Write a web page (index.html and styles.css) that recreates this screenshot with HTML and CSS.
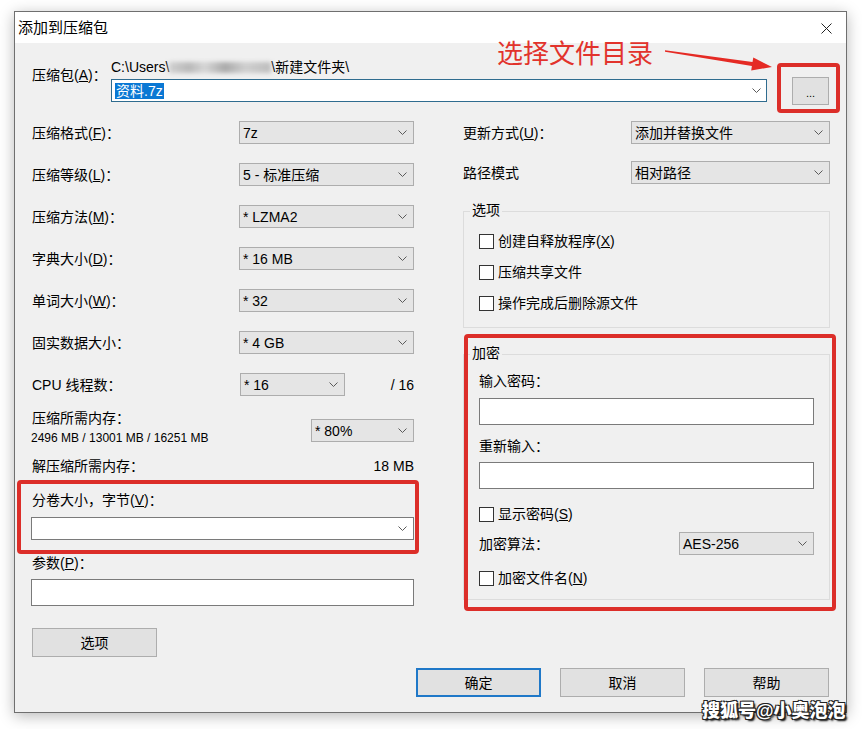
FILE: index.html
```html
<!DOCTYPE html>
<html>
<head>
  <meta charset="utf-8">
  <title>添加到压缩包</title>
  <link rel="stylesheet" href="styles.css">
</head>
<body>
  <div class="page">
    <div class="window">
      <div class="titlebar">
        <span class="title">添加到压缩包</span>
        <svg class="close" viewBox="0 0 11 11"><path d="M0.5 0.5 L10.5 10.5 M10.5 0.5 L0.5 10.5"/></svg>
      </div>
      <div class="dialog-body">
        <div class="archive-row">
          <div class="archive-label">压缩包(<u>A</u>)：</div>
          <div class="archive-field">
            <div class="path">C:\Users\<span class="blur"></span>\新建文件夹\</div>
            <div class="combo-edit">
              <span class="sel-text">资料.7z</span>
              <svg class="chev" viewBox="0 0 9 5"><polyline points="0.5,0.5 4.5,4.5 8.5,0.5"/></svg>
            </div>
          </div>
          <div class="btn browse-btn">...</div>
        </div>

        <div class="main">
          <!-- 左边 -->
          <div class="col-left">
            <div class="field-row">
              <span class="label">压缩格式(<u>F</u>)：</span>
              <div class="select"><span>7z</span><svg class="chev" viewBox="0 0 9 5"><polyline points="0.5,0.5 4.5,4.5 8.5,0.5"/></svg></div>
            </div>
            <div class="field-row">
              <span class="label">压缩等级(<u>L</u>)：</span>
              <div class="select"><span>5 - 标准压缩</span><svg class="chev" viewBox="0 0 9 5"><polyline points="0.5,0.5 4.5,4.5 8.5,0.5"/></svg></div>
            </div>
            <div class="field-row">
              <span class="label">压缩方法(<u>M</u>)：</span>
              <div class="select"><span>* LZMA2</span><svg class="chev" viewBox="0 0 9 5"><polyline points="0.5,0.5 4.5,4.5 8.5,0.5"/></svg></div>
            </div>
            <div class="field-row">
              <span class="label">字典大小(<u>D</u>)：</span>
              <div class="select"><span>* 16 MB</span><svg class="chev" viewBox="0 0 9 5"><polyline points="0.5,0.5 4.5,4.5 8.5,0.5"/></svg></div>
            </div>
            <div class="field-row">
              <span class="label">单词大小(<u>W</u>)：</span>
              <div class="select"><span>* 32</span><svg class="chev" viewBox="0 0 9 5"><polyline points="0.5,0.5 4.5,4.5 8.5,0.5"/></svg></div>
            </div>
            <div class="field-row">
              <span class="label">固实数据大小：</span>
              <div class="select"><span>* 4 GB</span><svg class="chev" viewBox="0 0 9 5"><polyline points="0.5,0.5 4.5,4.5 8.5,0.5"/></svg></div>
            </div>
            <div class="field-row cpu-row">
              <span class="label cpu-label">CPU 线程数：</span>
              <div class="select select-cpu"><span>* 16</span><svg class="chev" viewBox="0 0 9 5"><polyline points="0.5,0.5 4.5,4.5 8.5,0.5"/></svg></div>
              <span class="cpu-total">/ 16</span>
            </div>
            <div class="mem-row">
              <div class="mem-info">
                <div class="label">压缩所需内存：</div>
                <div class="mem-value">2496 MB / 13001 MB / 16251 MB</div>
              </div>
              <div class="select select-mem"><span>* 80%</span><svg class="chev" viewBox="0 0 9 5"><polyline points="0.5,0.5 4.5,4.5 8.5,0.5"/></svg></div>
            </div>
            <div class="decomp-row">
              <span class="label">解压缩所需内存：</span>
              <span>18 MB</span>
            </div>
            <div class="volume-label label">分卷大小，字节(<u>V</u>)：</div>
            <div class="combo-white"><svg class="chev" viewBox="0 0 9 5"><polyline points="0.5,0.5 4.5,4.5 8.5,0.5"/></svg></div>
            <div class="param-label label">参数(<u>P</u>)：</div>
            <div class="text-input"></div>
            <div class="btn options-btn">选项</div>
          </div>

          <!-- 右边 -->
          <div class="col-right">
            <div class="field-row">
              <span class="label">更新方式(<u>U</u>)：</span>
              <div class="select select-wide"><span>添加并替换文件</span><svg class="chev" viewBox="0 0 9 5"><polyline points="0.5,0.5 4.5,4.5 8.5,0.5"/></svg></div>
            </div>
            <div class="field-row">
              <span class="label">路径模式</span>
              <div class="select select-wide"><span>相对路径</span><svg class="chev" viewBox="0 0 9 5"><polyline points="0.5,0.5 4.5,4.5 8.5,0.5"/></svg></div>
            </div>

            <div class="group group-options">
              <div class="group-title">选项</div>
              <div class="check"><span class="box"></span><span>创建自释放程序(<u>X</u>)</span></div>
              <div class="check"><span class="box"></span><span>压缩共享文件</span></div>
              <div class="check"><span class="box"></span><span>操作完成后删除源文件</span></div>
            </div>

            <div class="group group-crypt">
              <div class="group-title">加密</div>
              <div class="crypt-label">输入密码：</div>
              <div class="text-input pwd"></div>
              <div class="crypt-label relabel">重新输入：</div>
              <div class="text-input pwd2"></div>
              <div class="check show-pwd"><span class="box"></span><span>显示密码(<u>S</u>)</span></div>
              <div class="algo-row">
                <span>加密算法：</span>
                <div class="select select-algo"><span>AES-256</span><svg class="chev" viewBox="0 0 9 5"><polyline points="0.5,0.5 4.5,4.5 8.5,0.5"/></svg></div>
              </div>
              <div class="check"><span class="box"></span><span>加密文件名(<u>N</u>)</span></div>
            </div>
          </div>
        </div>

        <div class="footer">
          <div class="btn btn-default">确定</div>
          <div class="btn">取消</div>
          <div class="btn">帮助</div>
        </div>
      </div>
    </div>

    <!-- 标注 -->
    <div class="note-text">选择文件目录</div>
    <svg class="note-arrow" viewBox="0 0 862 729">
      <polygon points="665,50.3 752.5,62 753.3,57.6 772,67 751.2,70.4 751.9,66 665,51.7"/>
    </svg>
    <div class="mark mark-browse"></div>
    <div class="mark mark-volume"></div>
    <div class="mark mark-crypt"></div>
    <div class="watermark">搜狐号@小奥泡泡</div>
  </div>
</body>
</html>
```

FILE: styles.css
```css
html,body{
  margin: 0;
  background: #fff;
}
body{
  font-family: "Liberation Sans", "Noto Sans CJK SC", sans-serif;
  font-size: 14px;
  line-height: 16px;
  color: #000;
}
u{
  text-decoration: underline;
  text-underline-offset: 1px;
}
.page{
  position: relative;
  width: 862px;
  height: 729px;
  overflow: hidden;
}

/* 窗口 */
.window{
  margin: 11px 0 0 14px;
  width: 831px;
  border: 1px solid #6f6f6f;
  background: #f0f0f0;
  box-shadow: 0 3px 14px rgba(0,0,0,0.28);
}
.titlebar{
  height: 31px;
  background: #fff;
  display: flex;
  align-items: center;
  justify-content: space-between;
  padding: 0 14px 0 3px;
}
.title{
  font-size: 15px;
}
.close{
  width: 11px;
  height: 11px;
  margin-top: 2px;
}
.close path{
  stroke: #222;
  stroke-width: 1;
  fill: none;
}
.dialog-body{
  height: 669px;
  box-sizing: border-box;
  padding: 17px 16px 0 16px;
}

/* 顶部 */
.archive-row{
  display: flex;
  height: 45px;
}
.archive-label{
  width: 80px;
  padding-left: 1px;
  box-sizing: border-box;
  margin-top: 7px;
}
.archive-field{
  width: 656px;
}
.path{
  height: 15px;
  line-height: 15px;
  white-space: nowrap;
}
.blur{
  display: inline-block;
  width: 102px;
  height: 11px;
  vertical-align: -1px;
  background: linear-gradient(90deg,#d0d0d0 0,#b9b9b9 20%,#d6d6d6 35%,#aaaaaa 55%,#cfcfcf 75%,#bdbdbd 100%);
  filter: blur(2px);
}
.combo-edit{
  margin-top: 4px;
  height: 23px;
  box-sizing: border-box;
  border: 1px solid #2f6c8f;
  background: #fff;
  display: flex;
  align-items: center;
  justify-content: space-between;
  padding: 0 5px 0 3px;
}
.sel-text{
  background: #0a78d4;
  color: #fff;
  padding: 0 1px;
  line-height: 16px;
}
.chev{
  width: 9px;
  height: 5px;
  flex-shrink: 0;
}
.chev polyline{
  fill: none;
  stroke: #5a5a5a;
  stroke-width: 1;
}
.btn{
  width: 125px;
  height: 29px;
  box-sizing: border-box;
  border: 1px solid #adadad;
  background: #e1e1e1;
  display: flex;
  align-items: center;
  justify-content: center;
}
.browse-btn{
  margin-left: 25px;
  margin-top: 17px;
  width: 37px;
  height: 28px;
  font-size: 11px;
  line-height: 11px;
  padding-top: 4px;
}

/* 主体两列 */
.main{
  display: grid;
  grid-template-columns: 383px 367px;
  column-gap: 49px;
  margin-top: 16px;
}
.field-row{
  display: flex;
  align-items: center;
  justify-content: space-between;
  height: 23px;
  margin-bottom: 19px;
}
.col-left .label{
  padding-left: 1px;
}
.select{
  width: 175px;
  height: 23px;
  box-sizing: border-box;
  border: 1px solid #adadad;
  background: #e5e5e5;
  display: flex;
  align-items: center;
  justify-content: space-between;
  padding: 0 6px 0 3px;
  white-space: nowrap;
}
.cpu-row{
  margin-bottom: 14px;
}
.cpu-label{
  width: 208px;
  flex-shrink: 0;
}
.select-cpu{
  width: 105px;
}
.cpu-total{
  flex: 1;
  text-align: right;
}
.mem-row{
  display: flex;
  justify-content: space-between;
  height: 35px;
}
.mem-value{
  font-size: 12px;
  line-height: 14px;
  margin-top: 5px;
}
.select-mem{
  width: 103px;
  margin-top: 9px;
}
.decomp-row{
  display: flex;
  justify-content: space-between;
  margin-top: 13px;
}
.volume-label{
  margin-top: 18px;
}
.combo-white{
  margin-top: 9px;
  height: 23px;
  box-sizing: border-box;
  border: 1px solid #7a7a7a;
  background: #fff;
  display: flex;
  align-items: center;
  justify-content: flex-end;
  padding-right: 6px;
}
.param-label{
  margin-top: 15px;
}
.text-input{
  margin-top: 8px;
  height: 27px;
  box-sizing: border-box;
  border: 1px solid #7a7a7a;
  background: #fff;
}
.options-btn{
  margin-top: 22px;
  margin-left: 1px;
}

/* 右列 */
.col-right .field-row{
  margin-bottom: 17px;
}
.select-wide{
  width: 199px;
}
.group{
  border: 1px solid #dcdcdc;
  padding: 0 15px 16px 15px;
}
.group-options{
  margin-top: 27px;
}
.group-title{
  margin: -10px 0 0 -9px;
  width: fit-content;
  padding: 0 2px;
  background: #f0f0f0;
}
.check{
  display: flex;
  align-items: center;
  gap: 4px;
  height: 16px;
  margin-top: 15px;
  white-space: nowrap;
}
.box{
  width: 15px;
  height: 15px;
  box-sizing: border-box;
  border: 1px solid #333;
  background: #fff;
}
.group-crypt{
  margin-top: 26px;
  padding-bottom: 13px;
}
.crypt-label{
  margin-top: 12px;
}
.pwd{
  margin-top: 9px;
}
.relabel{
  margin-top: 13px;
}
.show-pwd{
  margin-top: 17px;
}
.algo-row{
  display: flex;
  align-items: center;
  justify-content: space-between;
  margin-top: 10px;
}
.select-algo{
  width: 135px;
}

/* 底部按钮 */
.footer{
  display: flex;
  justify-content: flex-end;
  gap: 19px;
  margin-top: 11px;
  padding-right: 1px;
}
.btn-default{
  border: 2px solid #1f78c8;
}

/* 标注 */
.note-text{
  position: absolute;
  left: 497px;
  top: 38px;
  font-size: 26px;
  line-height: 32px;
  color: #e2332c;
  white-space: nowrap;
}
.note-arrow{
  position: absolute;
  left: 0;
  top: 0;
  width: 862px;
  height: 729px;
  pointer-events: none;
}
.note-arrow polygon{
  fill: #e52a24;
}
.mark{
  position: absolute;
  box-sizing: border-box;
  border: 4px solid #dc2e29;
  border-radius: 4px;
}
.mark-browse{
  left: 777px;
  top: 63px;
  width: 63px;
  height: 50px;
}
.mark-volume{
  left: 17px;
  top: 480px;
  width: 402px;
  height: 74px;
}
.mark-crypt{
  left: 464px;
  top: 334px;
  width: 372px;
  height: 277px;
}
.watermark{
  position: absolute;
  left: 702px;
  top: 699px;
  font-size: 18px;
  line-height: 24px;
  font-weight: 900;
  color: #fff;
  white-space: nowrap;
  text-shadow: 1px 1px 0 #222, -1px -1px 0 #222, 1px -1px 0 #222, -1px 1px 0 #222, 2px 2px 2px #000;
}
```
